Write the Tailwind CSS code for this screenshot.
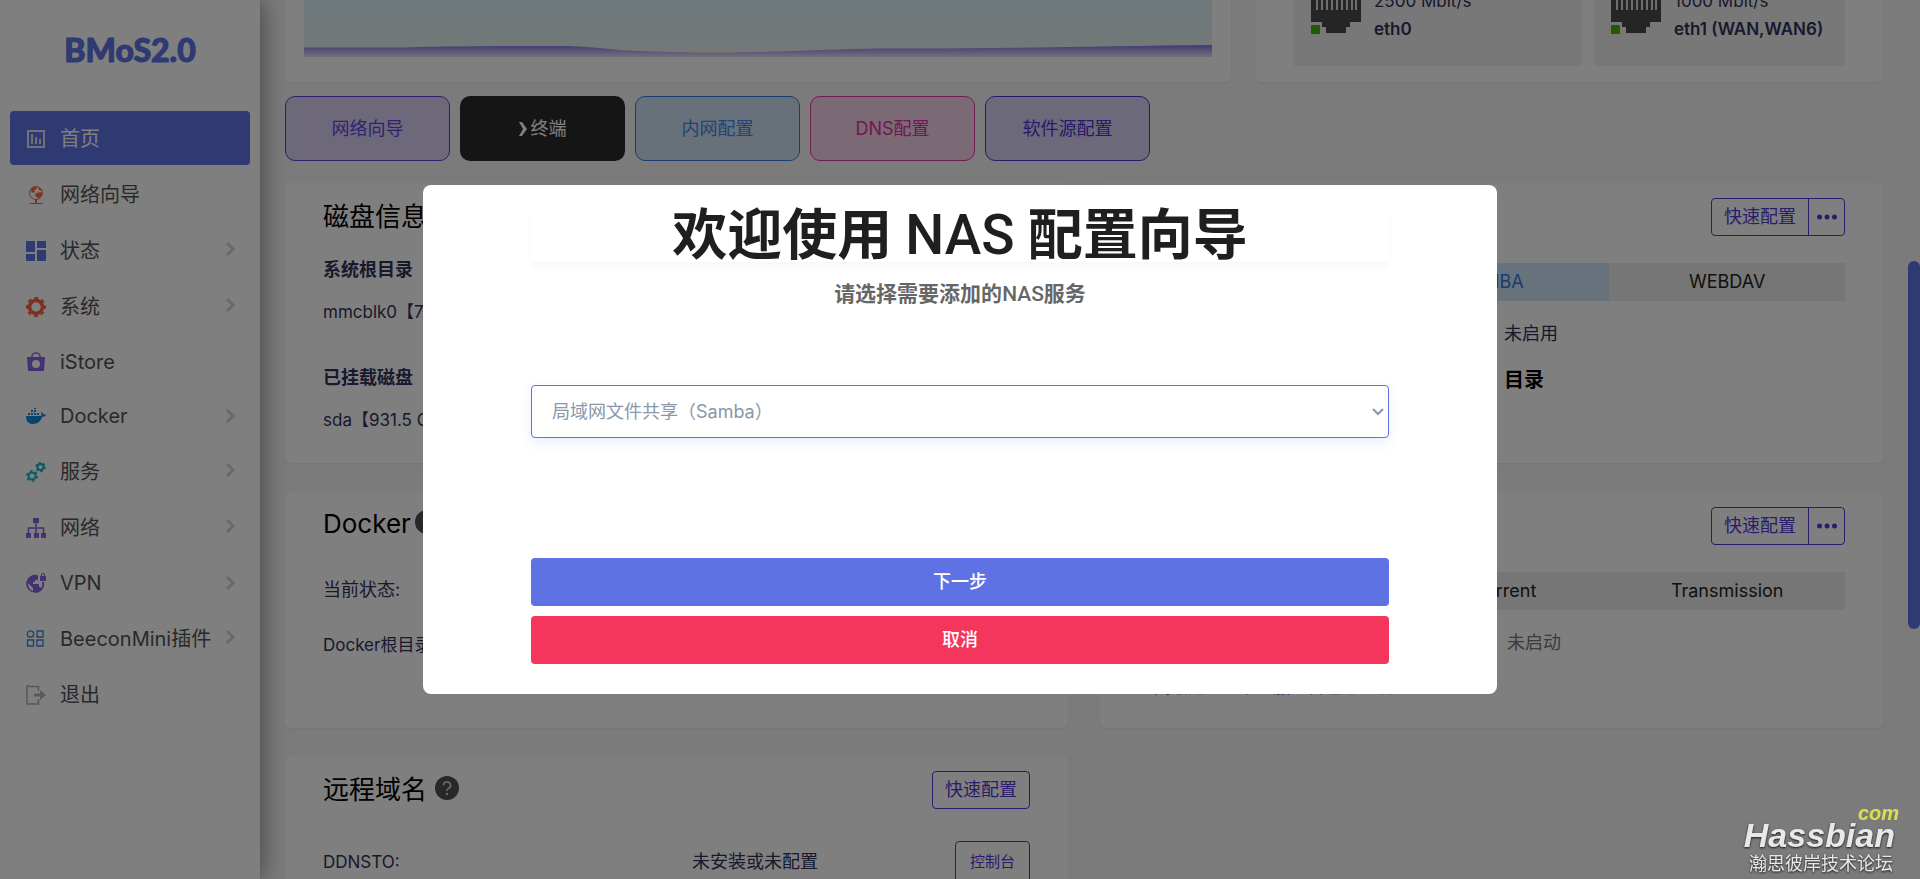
<!DOCTYPE html>
<html lang="zh-CN">
<head>
    <meta charset="UTF-8">
    <meta name="viewport" content="width=device-width, initial-scale=1.0">
    <title>BMoS2.0</title>
    <script src="https://cdn.jsdelivr.net/npm/@tailwindcss/browser@4"></script>
    <style>
        body { font-family: Inter, 'Noto Sans CJK SC', sans-serif; }
    </style>
</head>
<body class="bg-[#f6f6f9] h-screen overflow-hidden flex text-[#32325d] text-lg">

    <!-- Sidebar -->
    <aside class="w-[260px] shrink-0 bg-white shadow-[0_0_24px_rgba(0,0,0,0.5)] z-10 px-[10px] text-[#525252] text-xl">
        <h1 class="h-[111px] pt-[25px] text-center text-[32px] leading-[50px] font-black text-[#5e72e4] font-['Lato'] [-webkit-text-stroke:1px_#5e72e4]">BMoS2.0</h1>
        <nav>
            <ul class="space-y-[2px]">
                <li><a href="#" class="flex items-center h-[54px] pt-0.5 px-4 rounded bg-[#5e72e4] text-white">
                    <svg class="w-5 h-5 mr-[14px]" viewBox="0 0 20 20" fill="none" stroke="#e4e0ee" stroke-width="2"><path d="M2 2h16v16H2zM6 5v10M10 8v7M14 10v5"/></svg>
                    <span>首页</span>
                </a></li>
                <li><a href="#" class="flex items-center h-[54px] pt-0.5 px-4">
                    <svg class="w-5 h-5 mr-[14px]" viewBox="0 0 20 20" fill="#fb6340"><circle cx="10" cy="8" r="6.500" fill="none" stroke="#fb6340"/><path d="M6 3c3-2 5-1 5 1l-3 1 1 2-2 1-2-2-1 1zM10 8l5-1 1 3-4 4-1-2-2-1zM12 2l3 2 1 2-3-1zM9 14h2v4H9zM4 18h13v1H4z"/></svg>
                    <span>网络向导</span>
                </a></li>
                <li><a href="#" class="flex items-center h-[54px] pt-0.5 px-4">
                    <svg class="w-5 h-5 mr-[14px]" viewBox="0 0 20 20" fill="#5e72e4"><path d="M0 0h9v11H0zM11 0h9v7h-9zM0 13h9v7H0zM11 9h9v11h-9z"/></svg>
                    <span>状态</span>
                    <svg class="w-3 h-4 ml-auto -mr-0.5 mb-1" viewBox="0 0 12 16" fill="none" stroke="#ced4da" stroke-width="3"><path d="M3 2l6 6-6 6"/></svg>
                </a></li>
                <li><a href="#" class="flex items-center h-[54px] pt-0.5 px-4">
                    <svg class="w-5 h-5 mr-[14px]" viewBox="0 0 20 20" fill="none" stroke="#fb6340"><circle cx="10" cy="10" r="6.500" stroke-width="3.500"/><circle cx="10" cy="10" r="9" stroke-width="2" stroke-dasharray="4 3.070" stroke-dashoffset="2"/></svg>
                    <span>系统</span>
                    <svg class="w-3 h-4 ml-auto -mr-0.5 mb-1" viewBox="0 0 12 16" fill="none" stroke="#ced4da" stroke-width="3"><path d="M3 2l6 6-6 6"/></svg>
                </a></li>
                <li><a href="#" class="flex items-center h-[53px] px-4">
                    <svg class="w-5 h-5 mr-[14px]" viewBox="0 0 20 20"><path d="M6 6V4a4 3 0 0 1 8 0v2" fill="none" stroke="#8965e0" stroke-width="1.500"/><path fill="#8965e0" fill-rule="evenodd" d="M1 5h18l-1 14H2zM10 8a4 4 0 1 0 0 8 4 4 0 0 0 0-8z"/></svg>
                    <span>iStore</span>
                </a></li>
                <li><a href="#" class="flex items-center h-[52px] px-4">
                    <svg class="w-5 h-5 mr-[14px]" viewBox="0 0 20 20" fill="#0f8be0"><path d="M0 10h15c1-1 0-3 0-4 1 0 2 1 2 2 1 0 2 0 3 1-1 1-2 2-4 2-1 4-4 7-9 7-4 0-7-2-7-8zM2 7h2v2H2zM5 7h2v2H5zM8 7h2v2H8zM11 7h2v2h-2zM5 4h2v2H5zM8 4h2v2H8zM8 2h2v1H8z"/></svg>
                    <span>Docker</span>
                    <svg class="w-3 h-4 ml-auto -mr-0.5" viewBox="0 0 12 16" fill="none" stroke="#ced4da" stroke-width="3"><path d="M3 2l6 6-6 6"/></svg>
                </a></li>
                <li><a href="#" class="flex items-center h-[54px] pt-0.5 px-4">
                    <svg class="w-5 h-5 mr-[14px]" viewBox="0 0 20 20" fill="none" stroke="#11b5c9"><circle cx="14.500" cy="5" r="3" stroke-width="2"/><circle cx="14.500" cy="5" r="4.500" stroke-width="1.500" stroke-dasharray="2.300 2.412"/><circle cx="6" cy="14" r="3.500" stroke-width="2"/><circle cx="6" cy="14" r="5.200" stroke-width="1.600" stroke-dasharray="2.600 2.845"/></svg>
                    <span>服务</span>
                    <svg class="w-3 h-4 ml-auto -mr-0.5 mb-1" viewBox="0 0 12 16" fill="none" stroke="#ced4da" stroke-width="3"><path d="M3 2l6 6-6 6"/></svg>
                </a></li>
                <li><a href="#" class="flex items-center h-[54px] pt-0.5 px-4">
                    <svg class="w-5 h-5 mr-[14px]" viewBox="0 0 20 20" fill="#8965e0"><path d="M7 0h6v5H7zM0 15h5v5H0zM8 15h5v5H8zM15 15h5v5h-5z"/><path d="M10 5v10M2.500 15v-5h15v5" fill="none" stroke="#8965e0" stroke-width="1.500"/></svg>
                    <span>网络</span>
                    <svg class="w-3 h-4 ml-auto -mr-0.5 mb-1" viewBox="0 0 12 16" fill="none" stroke="#ced4da" stroke-width="3"><path d="M3 2l6 6-6 6"/></svg>
                </a></li>
                <li><a href="#" class="flex items-center h-[53px] px-4">
                    <svg class="w-5 h-5 mr-[14px]" viewBox="0 0 20 20" fill="#8965e0"><path fill-rule="evenodd" d="M12 2.300A9 9 0 1 0 18 9h-2c1 4-1 6-1 6-1-1-1-1-2-1v-3H7V9h2V7h2c1 0 1-1 1-2zM2 10l5 5v3c-3-1-5-4-5-8z"/><path d="M14 3h6v5h-6z"/><path d="M15.500 3V2a1.500 1.500 0 0 1 3 0v1" fill="none" stroke="#8965e0"/></svg>
                    <span>VPN</span>
                    <svg class="w-3 h-4 ml-auto -mr-0.5" viewBox="0 0 12 16" fill="none" stroke="#ced4da" stroke-width="3"><path d="M3 2l6 6-6 6"/></svg>
                </a></li>
                <li><a href="#" class="flex items-center h-[54px] pt-0.5 px-4">
                    <svg class="w-5 h-5 mr-[14px]" viewBox="0 0 20 20" fill="none" stroke="#4080d8" stroke-width="1.300"><circle cx="4.500" cy="5" r="3.200"/><path d="M11 2h6v6h-6zM1.500 11h6v6h-6zM11 11h6v6h-6z"/></svg>
                    <span>BeeconMini插件</span>
                    <svg class="w-3 h-4 ml-auto -mr-0.5 mb-1" viewBox="0 0 12 16" fill="none" stroke="#ced4da" stroke-width="3"><path d="M3 2l6 6-6 6"/></svg>
                </a></li>
                <li><a href="#" class="flex items-center h-[54px] pt-0.5 px-4">
                    <svg class="w-5 h-5 mr-[14px]" viewBox="0 0 20 20" fill="none" stroke="#adb5bd" stroke-width="1.600"><path d="M12.500 6V1.500h-8L1 1v18h11.500v-5"/><path d="M8 8.500h6V5l6 5-6 5v-3.500H8z" fill="#adb5bd" stroke="none"/></svg>
                    <span>退出</span>
                </a></li>
            </ul>
        </nav>
    </aside>

    <!-- Dashboard -->
    <main class="flex-1 min-w-0 pl-[25px] pr-[37px]">
        <div class="grid grid-cols-[946fr_627fr] gap-[25px] h-[102px] -mt-5">
            <section class="bg-white rounded-md shadow-xs px-[19px] pb-[25px]">
                <svg class="w-full h-[77px]" viewBox="0 0 908 77" preserveAspectRatio="none">
                    <defs>
                        <linearGradient id="sky" x1="0" y1="0" x2="0" y2="1"><stop offset="0.2" stop-color="#dbf0f8"/><stop offset="1" stop-color="#e8f2ee"/></linearGradient>
                        <linearGradient id="wave" x1="0" y1="0" x2="0" y2="1"><stop offset="0" stop-color="#8673e6"/><stop offset="1" stop-color="#e4e1f6"/></linearGradient>
                    </defs>
                    <path fill="url(#sky)" d="M0 0h908v77H0z"/>
                    <path fill="url(#wave)" d="M0 67.500H100C160 66 200 66 255 66C290 66 310 71 350 71.500C400 73 430 73 470 71.500C520 70 540 69 580 68.500C700 69 800 66 908 65V77H0z"/>
                </svg>
            </section>
            <section class="bg-white rounded-md shadow-xs px-[38px] pb-4 grid grid-cols-[288fr_251fr] gap-3 text-[17px]">
                <div class="bg-[#f1f1f1] flex pl-[14px] pt-[7px] leading-7">
                    <svg class="w-14 h-[50px] mr-[10px]" viewBox="0 0 56 50"><path fill="#eee" d="M0 0h56v50H0z"/><path fill="#4b4b4b" d="M3 0h50v35H42v5h-4v6H18v-6h-4v-5H3z"/><path d="M9 0v23M14 0v23M19 0v23M24 0v23M29 0v23M34 0v23M39 0v23M44 0v23M48 0v23" stroke="#ddd" stroke-width="2"/><rect x="3" y="38" width="9" height="9" rx="1" fill="#43b505"/></svg>
                    <div class="whitespace-nowrap">
                        <p>2500 Mbit/s</p>
                        <p class="font-semibold">eth0</p>
                    </div>
                </div>
                <div class="bg-[#f1f1f1] flex pl-[14px] pt-[7px] leading-7">
                    <svg class="w-14 h-[50px] mr-[10px]" viewBox="0 0 56 50"><path fill="#eee" d="M0 0h56v50H0z"/><path fill="#4b4b4b" d="M3 0h50v35H42v5h-4v6H18v-6h-4v-5H3z"/><path d="M9 0v23M14 0v23M19 0v23M24 0v23M29 0v23M34 0v23M39 0v23M44 0v23M48 0v23" stroke="#ddd" stroke-width="2"/><rect x="3" y="38" width="9" height="9" rx="1" fill="#43b505"/></svg>
                    <div class="whitespace-nowrap">
                        <p>1000 Mbit/s</p>
                        <p class="font-semibold">eth1 (WAN,WAN6)</p>
                    </div>
                </div>
            </section>
        </div>

        <div class="flex gap-[10px] mt-[14px]">
            <button class="w-[165px] h-[65px] rounded-[10px] border border-[#5e3fd8] bg-[#dad3f4] text-[#5e45e4]">网络向导</button>
            <button class="w-[165px] h-[65px] rounded-[10px] bg-[#2b2b2b] text-white flex items-center justify-center gap-1">
                <svg class="w-2 h-[14px]" viewBox="0 0 8 14" fill="white"><path d="M0 0h3l5 7-5 7H0l4-7z"/></svg>终端
            </button>
            <button class="w-[165px] h-[65px] rounded-[10px] border border-[#337bdc] bg-[#d0e2f5] text-[#4687e6]">内网配置</button>
            <button class="w-[165px] h-[65px] rounded-[10px] border border-[#e03aa6] bg-[#f6d2ea] text-[#e033a4]">DNS配置</button>
            <button class="w-[165px] h-[65px] rounded-[10px] border border-[#4e35d6] bg-[#d6d3f4] text-[#4e35d6]">软件源配置</button>
        </div>

        <div class="grid grid-cols-2 gap-x-8 mt-[22px]">
            <section class="bg-white rounded-md shadow-xs px-[38px] pt-[15px] pb-[22px] leading-[42px]">
                <h2 class="text-[26px] leading-[38px] text-black">磁盘信息</h2>
                <h3 class="font-bold mt-[13px]">系统根目录</h3>
                <p class="text-[17px]">mmcblk0【7.28 GB】</p>
                <h3 class="font-bold mt-6">已挂载磁盘</h3>
                <p class="text-[17px]">sda【931.5 GB】</p>
            </section>
            <section class="bg-white rounded-md shadow-xs px-[38px] pt-[15px] leading-[42px]">
                <div class="flex justify-between">
                    <h2 class="text-[26px] leading-[38px] text-black">文件共享</h2>
                    <div class="flex h-[38px] border border-[#5438d8] rounded text-[#5438d8] leading-9">
                        <button class="px-3">快速配置</button>
                        <button class="w-[36px] border-l border-[#5438d8] flex items-center justify-center" aria-label="更多">
                            <svg class="w-5 h-1.5" viewBox="0 0 20 6" fill="#5438d8"><circle cx="2.500" cy="3" r="2.500"/><circle cx="10" cy="3" r="2.500"/><circle cx="17.500" cy="3" r="2.500"/></svg>
                        </button>
                    </div>
                </div>
                <div class="grid grid-cols-3 mt-[27px] bg-[#ededed] text-[#222] leading-[38px]">
                    <button>统一文件</button>
                    <button class="bg-[#cfe5fa] text-[#3379d9]">SAMBA</button>
                    <button>WEBDAV</button>
                </div>
                <div class="grid grid-cols-[366fr_341fr] mt-3">
                    <span>服务状态</span><span>未启用</span>
                </div>
                <div class="grid grid-cols-[366fr_341fr] mt-1 text-xl leading-[42px] font-bold text-black">
                    <span>共享名</span><span>目录</span>
                </div>
            </section>
        </div>

        <div class="grid grid-cols-2 gap-x-8 mt-[29px]">
            <section class="bg-white rounded-md shadow-xs px-[38px] pt-[15px] pb-[62px] leading-[42px]">
                <div class="flex items-start h-[38px] text-black">
                    <h2 class="text-[26px] leading-[34px] mr-1">Docker</h2>
                    <svg class="w-6 h-6 mt-[3px]" viewBox="0 0 24 24"><circle cx="12" cy="12" r="12" fill="#505050"/><path d="M8.500 9.500a3.500 3.500 0 1 1 5 3c-1 .7-1.500 1-1.500 2.500" fill="none" stroke="#ccc" stroke-width="1.800"/><circle cx="12" cy="18" r="1.200" fill="#ccc"/></svg>
                </div>
                <p class="mt-6">当前状态:</p>
                <p class="mt-[13px] text-[17px]">Docker根目录:</p>
            </section>
            <section class="bg-white rounded-md shadow-xs px-[38px] pt-[15px] leading-[42px]">
                <div class="flex justify-between">
                    <h2 class="text-[26px] leading-[38px] text-black">下载服务</h2>
                    <div class="flex h-[38px] border border-[#5438d8] rounded text-[#5438d8] leading-9">
                        <button class="px-3">快速配置</button>
                        <button class="w-[36px] border-l border-[#5438d8] flex items-center justify-center" aria-label="更多">
                            <svg class="w-5 h-1.5" viewBox="0 0 20 6" fill="#5438d8"><circle cx="2.500" cy="3" r="2.500"/><circle cx="10" cy="3" r="2.500"/><circle cx="17.500" cy="3" r="2.500"/></svg>
                        </button>
                    </div>
                </div>
                <div class="grid grid-cols-3 mt-[27px] bg-[#ededed] text-[#222] leading-[38px]">
                    <button>Aria2</button>
                    <button>qBittorrent</button>
                    <button>Transmission</button>
                </div>
                <div class="grid grid-cols-[369fr_338fr] mt-3 text-[#777]">
                    <span>服务状态</span><span>未启动</span>
                </div>
                <a href="#" class="block mt-[2px] pl-4 text-[17px] leading-[42px] text-[#2f6fd0]">高级配置（下载服务管理进入设置）</a>
            </section>
        </div>

        <div class="grid grid-cols-2 gap-x-8 mt-7">
            <section class="bg-white rounded-md shadow-xs px-[38px] pt-[15px] pb-6">
                <div class="flex items-center text-black">
                    <h2 class="text-[26px] leading-[38px] mr-2">远程域名</h2>
                    <svg class="w-6 h-6 -mt-1" viewBox="0 0 24 24"><circle cx="12" cy="12" r="12" fill="#505050"/><path d="M8.500 9.500a3.500 3.500 0 1 1 5 3c-1 .7-1.500 1-1.500 2.500" fill="none" stroke="#ccc" stroke-width="1.800"/><circle cx="12" cy="18" r="1.200" fill="#ccc"/></svg>
                    <button class="ml-auto h-[38px] px-3 border border-[#5438d8] rounded text-[#5438d8]">快速配置</button>
                </div>
                <div class="grid grid-cols-[369fr_338fr] mt-8 items-center">
                    <span class="text-[17px]">DDNSTO:</span>
                    <div class="flex items-center justify-between">
                        <span>未安装或未配置</span>
                        <button class="h-[42px] w-[75px] border border-[#5438d8] rounded text-[#5438d8] text-[15px]">控制台</button>
                    </div>
                </div>
            </section>
        </div>
    </main>

    <div class="fixed right-0 top-[261px] w-3 h-[368px] rounded-full bg-[#5e72e4]"></div>

    <!-- Wizard dialog -->
    <div class="fixed inset-0 z-20 bg-black/50 flex items-center justify-center">
        <div role="dialog" aria-labelledby="wizardTitle" class="w-full max-w-[1074px] bg-white rounded-lg px-[108px] pt-[22px] pb-[30px]">
            <h2 id="wizardTitle" class="h-[55px] rounded-md shadow-[0_6px_10px_rgba(0,0,0,0.03)] text-center text-[55px] leading-[54px] font-bold text-[#1f1f1f]">欢迎使用 <span class="font-medium font-['Roboto']">NAS</span> 配置向导</h2>
            <p class="mt-4 text-center text-[21px] leading-8 font-bold text-[#666]">请选择需要添加的<span class="font-medium font-['Roboto']">NAS</span>服务</p>
            <div class="relative mt-[75px]">
                <select aria-label="NAS服务" class="w-full h-[53px] pl-5 appearance-none border border-[#5e72e4] rounded bg-white text-[#8898aa] shadow-[0_4px_12px_rgba(94,114,228,0.13)]">
                    <option>局域网文件共享（Samba）</option>
                </select>
                <svg class="absolute right-[5px] top-[23px] w-3 h-2 pointer-events-none" viewBox="0 0 12 8" fill="none" stroke="#8898aa" stroke-width="2"><path d="M1 1l5 5 5-5"/></svg>
            </div>
            <button class="block w-full h-12 mt-[120px] rounded bg-[#5e72e4] text-white font-medium">下一步</button>
            <button class="block w-full h-12 mt-[10px] rounded bg-[#f5365c] text-white font-medium">取消</button>
        </div>
    </div>

    <!-- Forum mark -->
    <div class="fixed z-30 right-[21px] bottom-1 text-right text-[#e8e8e8] font-['Liberation_Sans']">
        <div class="text-xl leading-4 font-bold italic text-[#d9e04f]">com</div>
        <div class="text-[34px] leading-[28px] font-bold italic mr-1 drop-shadow-[0_1px_1px_rgba(0,0,0,0.8)]">Hassbian</div>
        <div class="mr-1.5 text-lg leading-[26px] font-['Noto_Sans_CJK_SC'] drop-shadow-[0_1px_1px_rgba(0,0,0,0.8)]">瀚思彼岸技术论坛</div>
    </div>
</body>
</html>
